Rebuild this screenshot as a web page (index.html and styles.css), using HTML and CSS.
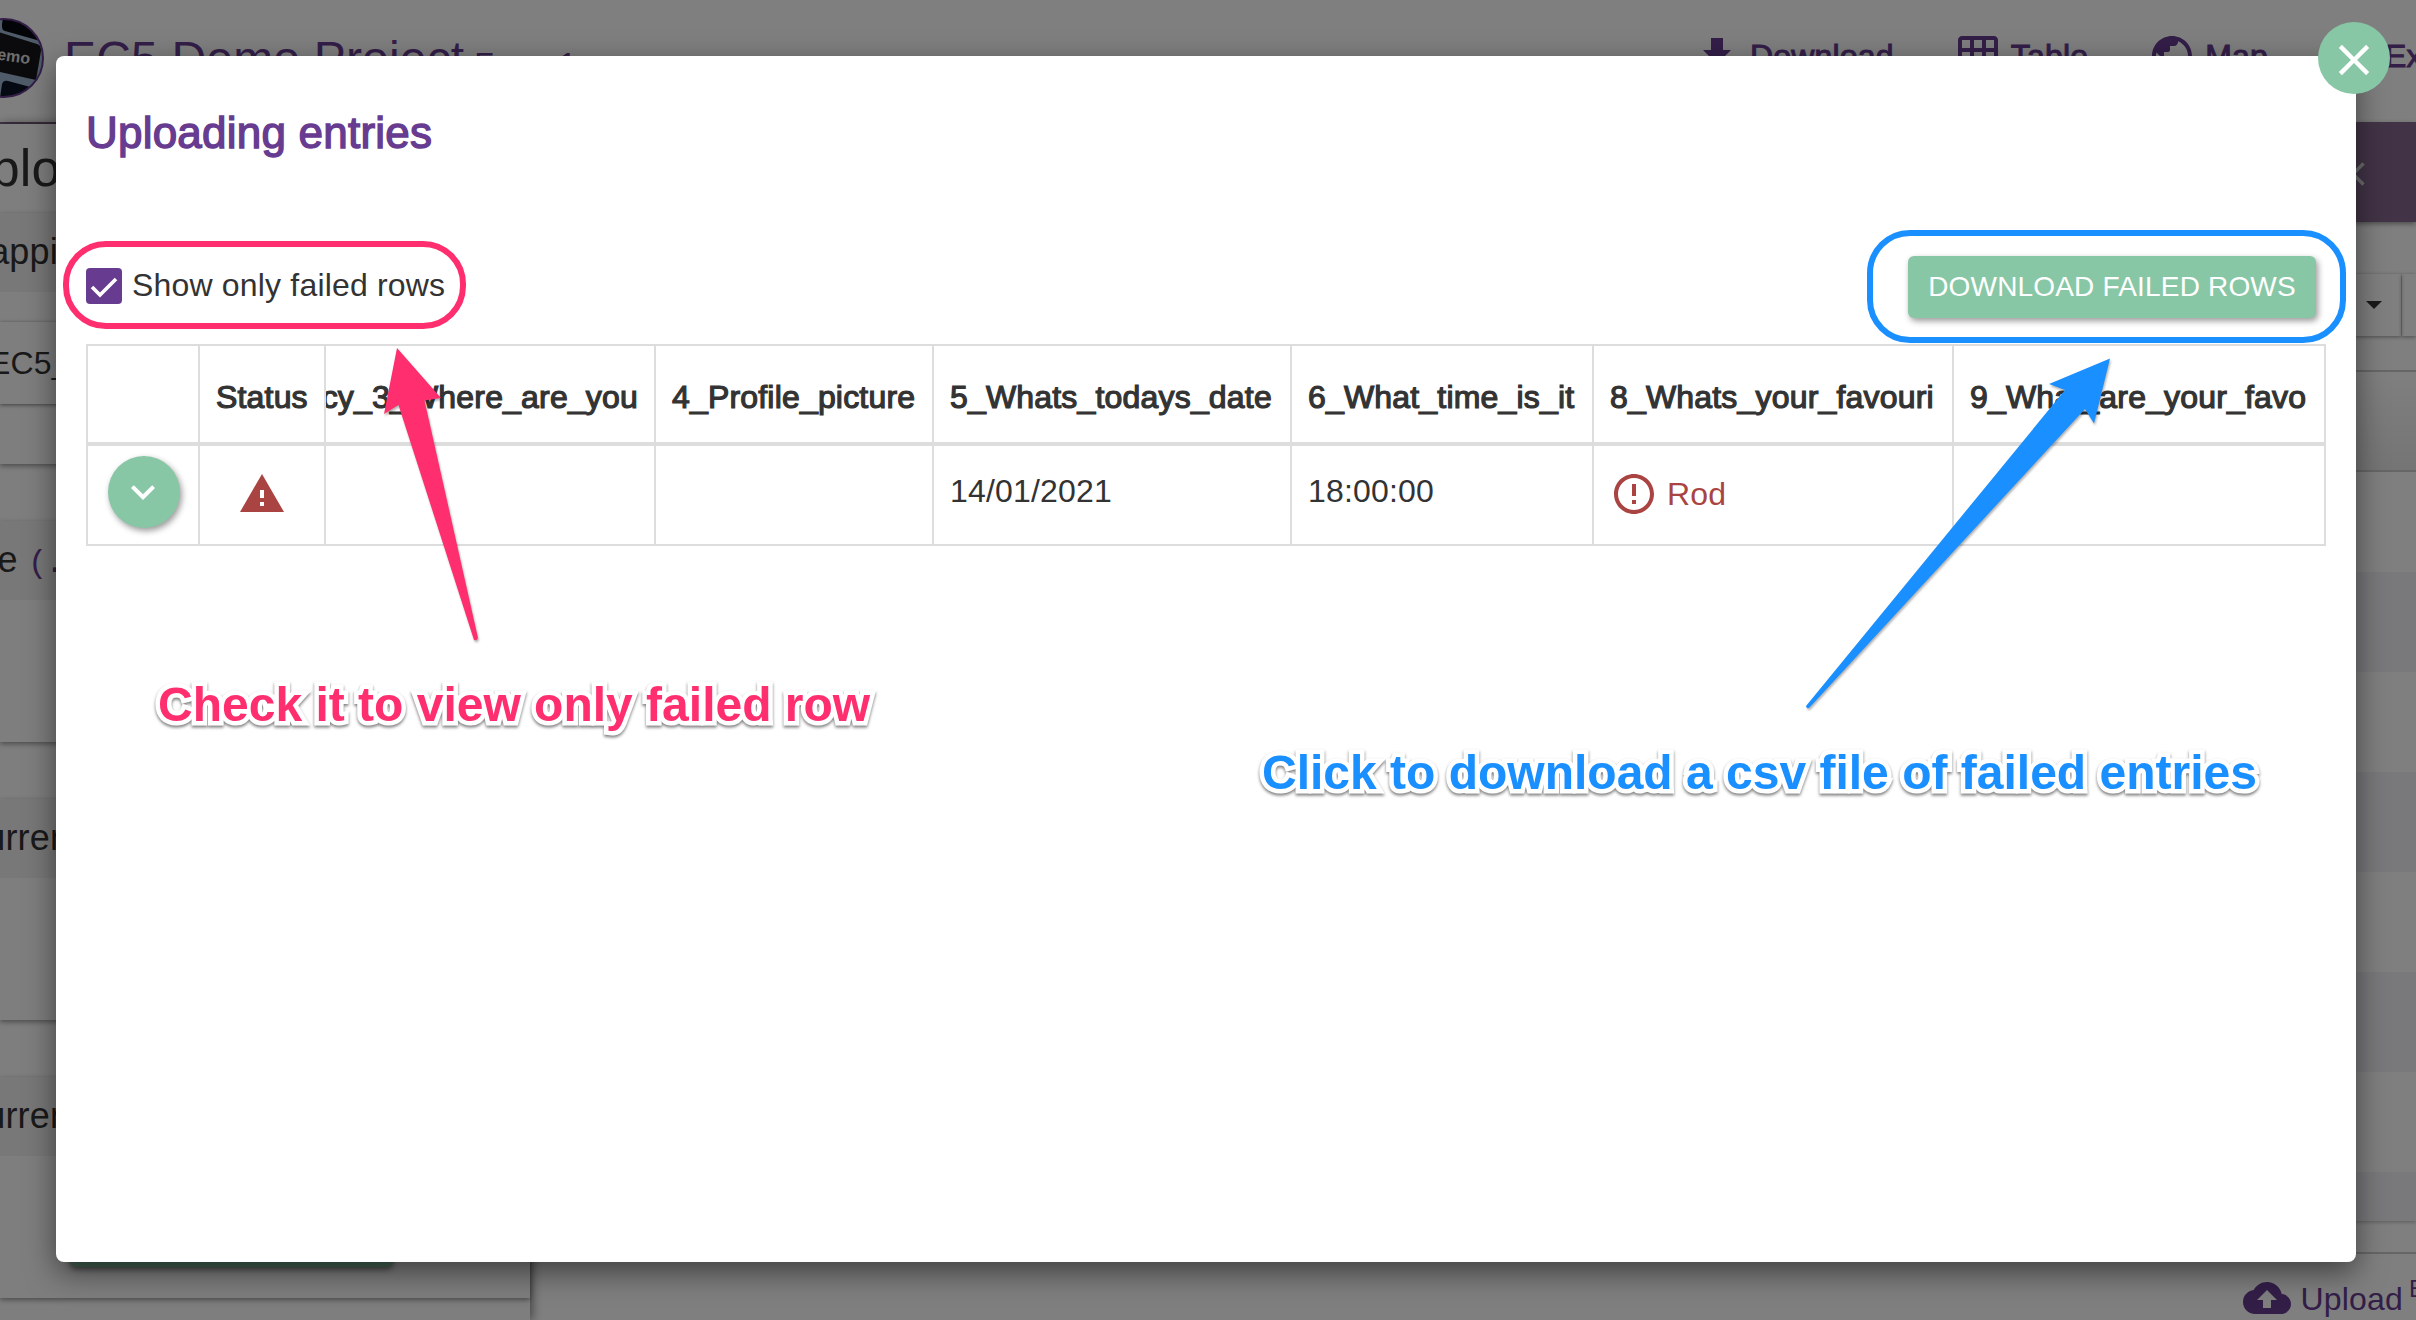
FILE: index.html
```html
<!DOCTYPE html>
<html lang="en">
<head>
<meta charset="utf-8">
<title>EC5 Demo Project</title>
<link rel="stylesheet" href="styles.css">
</head>
<body>
<div class="page">
  <header class="topbar">
    <div class="brand">
      <svg class="logo" viewBox="0 0 80 80">
        <defs><clipPath id="disc"><circle cx="40" cy="40" r="39"/></clipPath></defs>
        <g clip-path="url(#disc)">
          <rect width="80" height="80" fill="#9fb6d0"/>
          <path d="M39 0H80V24L41 13C38 12 37 10 39 0Z" fill="#06080f"/>
          <path d="M0 5L34 14L73 26C76 27 77 29 77 33L72 62L36 54L0 44Z" fill="#17171a"/>
          <path d="M36 80L38 66C39 63 41 62 44 63L74 71V80Z" fill="#0a1424"/>
        </g>
        <circle cx="40" cy="40" r="39" fill="none" stroke="#673c90" stroke-width="2"/>
        <text class="logo-text" x="23" y="42" transform="rotate(8 36 42)">demo</text>
      </svg>
      <span class="project">EC5 Demo Project</span>
      <span class="form-name">Form 1</span>
    </div>
    <nav class="nav">
      <a class="nav-item nav-download"><svg viewBox="0 0 24 24"><path d="M19 9h-4V3H9v6H5l7 7 7-7zM5 18v2h14v-2H5z"/></svg>Download</a>
      <a class="nav-item nav-table"><svg viewBox="0 0 24 24"><path d="M20 2H4c-1.1 0-2 .9-2 2v16c0 1.1.9 2 2 2h16c1.1 0 2-.9 2-2V4c0-1.1-.9-2-2-2zM8 20H4v-4h4v4zm0-6H4v-4h4v4zm0-6H4V4h4v4zm6 12h-4v-4h4v4zm0-6h-4v-4h4v4zm0-6h-4V4h4v4zm6 12h-4v-4h4v4zm0-6h-4v-4h4v4zm0-6h-4V4h4v4z"/></svg>Table</a>
      <a class="nav-item nav-map"><svg viewBox="0 0 24 24"><path d="M12 2C6.48 2 2 6.48 2 12s4.48 10 10 10 10-4.480 10-10S17.520 2 12 2zm-1 17.930c-3.950-.49-7-3.850-7-7.930 0-.62.08-1.210.21-1.790L9 15v1c0 1.100.9 2 2 2v1.930zm6.900-2.540c-.26-.81-1-1.390-1.900-1.390h-1v-3c0-.55-.45-1-1-1H8v-2h2c.55 0 1-.45 1-1V7h2c1.100 0 2-.9 2-2v-.41c2.930 1.190 5 4.060 5 7.410 0 2.080-.8 3.970-2.100 5.390z"/></svg>Map</a>
      <a class="nav-item nav-exit">Exit</a>
    </nav>
  </header>
  <div class="main">
    <aside class="sidebar">
      <h1 class="side-title">Uploading</h1>
      <section class="card card-map">
        <h2 class="card-head">Mapping</h2>
        <div class="card-body"><div class="select">EC5_</div></div>
      </section>
      <section class="card"><h2 class="card-head head-file">file <code>(.csv)</code></h2></section>
      <section class="card"><h2 class="card-head">Current</h2></section>
      <section class="card"><h2 class="card-head">Current</h2><div class="side-button"></div></section>
    </aside>
    <section class="content">
      <div class="bar"><svg viewBox="0 0 24 24"><path d="M19 6.410L17.590 5 12 10.590 6.410 5 5 6.410 10.590 12 5 17.590 6.410 19 12 13.410 17.590 19 19 17.590 13.410 12z"/></svg></div>
      <div class="filters"><div class="filter"><span class="caret"></span></div><div class="filter filter-end"></div></div>
      <div class="grid-head"></div>
      <div class="grid-row"></div><div class="grid-row"></div><div class="grid-row"></div><div class="grid-row"></div>
      <div class="grid-row"></div><div class="grid-row"></div><div class="grid-row"></div><div class="grid-row row-cut"></div>
      <footer class="foot">
        <svg viewBox="0 0 24 24"><path d="M19.350 10.040C18.670 6.590 15.640 4 12 4 9.110 4 6.600 5.640 5.350 8.040 2.340 8.360 0 10.910 0 14c0 3.310 2.690 6 6 6h13c2.760 0 5-2.240 5-5 0-2.640-2.050-4.780-4.650-4.960zM14 13v4h-4v-4H7l5-5 5 5h-3z"/></svg>
        <span>Upload</span><span class="beta">BETA</span>
      </footer>
    </section>
  </div>
</div>

<div class="backdrop">
  <div class="modal">
    <h2 class="modal-title">Uploading entries</h2>
    <div class="tools">
      <label class="check">
        <span class="box"><svg viewBox="0 0 36 36"><path d="M6 19L14 27L30 11" fill="none" stroke="#fff" stroke-width="3.600"/></svg></span>
        Show only failed rows
      </label>
      <button class="download">DOWNLOAD FAILED ROWS</button>
    </div>
    <div class="table">
      <div class="cell th"></div>
      <div class="cell th">Status</div>
      <div class="cell th clipped">cy_3_Where_are_you</div>
      <div class="cell th">4_Profile_picture</div>
      <div class="cell th">5_Whats_todays_date</div>
      <div class="cell th">6_What_time_is_it</div>
      <div class="cell th">8_Whats_your_favouri</div>
      <div class="cell th">9_What_are_your_favo</div>
      <div class="cell mid"><span class="expand"><svg viewBox="0 0 24 24"><path d="M7.410 8.590L12 13.170l4.590-4.580L18 10l-6 6-6-6z"/></svg></span></div>
      <div class="cell mid"><svg class="icon" viewBox="0 0 24 24"><path d="M1 21h22L12 2 1 21zm12-3h-2v-2h2v2zm0-4h-2v-4h2v4z"/></svg></div>
      <div class="cell"></div>
      <div class="cell"></div>
      <div class="cell value">14/01/2021</div>
      <div class="cell value">18:00:00</div>
      <div class="cell error"><svg class="icon" viewBox="0 0 24 24"><path d="M11 15h2v2h-2zm0-8h2v6h-2zm.99-5C6.470 2 2 6.480 2 12s4.470 10 9.990 10C17.520 22 22 17.520 22 12S17.520 2 11.990 2zM12 20c-4.420 0-8-3.580-8-8s3.580-8 8-8 8 3.580 8 8-3.580 8-8 8z"/></svg>Rod</div>
      <div class="cell"></div>
    </div>
    <span class="close"><svg viewBox="0 0 24 24"><path d="M19 6.410L17.590 5 12 10.590 6.410 5 5 6.410 10.590 12 5 17.590 6.410 19 12 13.410 17.590 19 19 17.590 13.410 12z"/></svg></span>
  </div>
</div>

<div class="ring ring-pink"></div>
<div class="ring ring-blue"></div>
<svg class="arrows" viewBox="0 0 2416 1320">
  <path fill="#ff2e6e" d="M397 348L441 398L424.500 400.500L478 638Q477 641 474 640L398.500 405L384 414Z"/>
  <path fill="#1a8fff" d="M2110 358.500L2094 423.500L2085 409L1810 707Q1807 710 1806 706L2065 390L2049 384Z"/>
</svg>
<div class="note note-pink">Check it to view only failed row</div>
<div class="note note-blue">Click to download a csv file of failed entries</div>
</body>
</html>
```
FILE: styles.css
```css
* { box-sizing: border-box; }
body {
  margin: 0;
  width: 2416px;
  height: 1320px;
  overflow: hidden;
  position: relative;
  font-family: "Liberation Sans", Arial, sans-serif;
  font-size: 32px;
  letter-spacing: .18px;
  color: #333;
  background: #fff;
}
h1, h2 { margin: 0; font-weight: 400; }
svg { display: block; fill: currentColor; flex: none; }

/* Page under the dialog */
.page { height: 1320px; display: flex; flex-direction: column; overflow: hidden; }
.topbar {
  height: 124px;
  flex: none;
  display: flex;
  justify-content: space-between;
  border-bottom: 2px solid #85698c;
  color: #673c90;
}
.brand { display: flex; align-items: flex-start; margin-left: -36px; }
.logo { width: 80px; height: 80px; margin-top: 18px; }
.logo-text { fill: #ddd; font-size: 16px; font-weight: 700; letter-spacing: 0; }
.project { font-size: 48px; line-height: 56px; margin: 31px 0 0 20px; }
.form-name { line-height: 40px; margin: 44px 0 0 10px; }
.nav { display: flex; align-items: flex-start; padding-top: 32px; width: 723px; }
.nav-item { display: flex; align-items: center; gap: 9px; line-height: 48px; -webkit-text-stroke: 1px; white-space: nowrap; }
.nav-item svg { width: 48px; height: 48px; stroke: none; }
.nav-table { margin-left: 60px; }
.nav-map { margin-left: 60px; }
.nav-exit { margin-left: 117px; }

.main { flex: 1; display: flex; min-height: 0; }
.sidebar {
  width: 530px;
  position: relative;
  background: #fcfcfc;
  box-shadow: 2px 0 10px rgba(0, 0, 0, .5);
  padding-bottom: 21px;
}
.side-title { font-size: 52px; line-height: 60px; padding-top: 14px; height: 89px; margin-left: -47px; }
.card { height: 221px; margin-bottom: 57px; box-shadow: 0 2px 5px rgba(0, 0, 0, .4); }
.card-map { height: 251px; }
.card-head { height: 79px; font-size: 36px; line-height: 77px; background: #f0f0f0; text-indent: -41px; white-space: nowrap; }
.head-file { text-indent: -29px; }
.head-file code { font: 32px "Liberation Mono", monospace; color: #673c90; margin-left: 0; letter-spacing: -2px; }
.card-body { padding: 30px 24px 0 0; }
.select { height: 82px; line-height: 82px; text-indent: -11px; box-shadow: 0 1px 4px rgba(0, 0, 0, .5); }
.side-button { width: 323px; height: 62px; margin: 49px 0 0 70px; border-radius: 6px; background: #88c7a6; box-shadow: 0 2px 6px rgba(0, 0, 0, .5); }

.content { flex: 1; margin-top: -2px; display: flex; flex-direction: column; }
.bar {
  height: 100px;
  flex: none;
  background: #85698c;
  color: #ddd;
  display: flex;
  justify-content: flex-end;
  align-items: center;
  padding: 4px 43px 0 0;
  box-shadow: 0 2px 5px rgba(0, 0, 0, .4);
}
.bar svg { width: 40px; height: 40px; }
.filters { display: flex; justify-content: flex-end; gap: 1px; margin-top: 52px; height: 62px; flex: none; }
.filter { width: 260px; display: flex; justify-content: flex-end; align-items: center; padding-right: 19px; box-shadow: 0 1px 4px rgba(0, 0, 0, .4); }
.filter-end { width: 14px; padding: 0; }
.caret { border: 8px solid transparent; border-top-color: #333; border-bottom: 0; margin-bottom: 0; }
.grid-head { height: 102px; flex: none; margin-top: 34px; border: solid #ccc; border-width: 2px 0; background: linear-gradient(#fff, #eaeaea); }
.grid-row { height: 100px; flex: none; }
.grid-row:nth-of-type(odd) { background: #f2f2f7; }
.grid-row:nth-of-type(even) { background: #fff; }
.row-cut { height: 49px; background: #f2f2f7; box-shadow: 0 2px 3px rgba(0, 0, 0, .2); }
.foot {
  margin-top: 31px;
  border-top: 2px solid #ccc;
  height: 68px;
  display: flex;
  justify-content: flex-end;
  padding-top: 20px;
  color: #673c90;
  line-height: 50px;
}
.foot svg { width: 48px; height: 48px; margin-right: 10px; }
.beta { font-size: 24px; line-height: 30px; width: 7px; margin-left: 6px; overflow: hidden; }

/* Dialog */
.backdrop { position: absolute; inset: 0; background: rgba(0, 0, 0, .5); padding: 56px 60px 58px 56px; }
.modal {
  position: relative;
  height: 1206px;
  padding: 53px 30px 0;
  background: #fff;
  border-radius: 8px;
  box-shadow: 0 10px 30px rgba(0, 0, 0, .5);
}
.modal-title { font-size: 44px; line-height: 48px; color: #673c90; -webkit-text-stroke: 1.400px; letter-spacing: .22px; }
.tools { display: flex; justify-content: space-between; height: 62px; margin: 99px 10px 26px 0; }
.check { display: flex; align-items: center; gap: 10px; height: 58px; }
.box { width: 36px; height: 36px; background: #673c90; border-radius: 4px; margin-top: 2px; }
.download {
  width: 408px;
  height: 62px;
  border: 0;
  padding: 0;
  border-radius: 6px;
  background: #88c7a6;
  color: #fff;
  font: 28px "Liberation Sans", Arial, sans-serif;
  letter-spacing: .18px;
  white-space: nowrap;
  box-shadow: 2px 3px 6px rgba(0, 0, 0, .4);
}
.table {
  display: grid;
  grid-template-columns: 112px 126px 330px 278px 358px 302px 360px 372px;
  grid-template-rows: 100px 100px;
  border: 2px solid #ddd;
  border-right: 0;
  border-bottom: 0;
}
.cell { border-right: 2px solid #ddd; border-bottom: 2px solid #ddd; padding: 0 16px; display: flex; align-items: center; white-space: nowrap; overflow: hidden; }
.th { border-bottom-width: 4px; padding-top: 6px; -webkit-text-stroke: 1.200px; }
.clipped { justify-content: flex-end; }
.mid { justify-content: center; color: #a94442; padding: 0; }
.value { padding-bottom: 8px; }
.icon { width: 48px; height: 48px; }
.error { color: #a94442; gap: 9px; padding-bottom: 2px; }
.expand { width: 72px; height: 72px; border-radius: 50%; background: #88c7a6; color: #fff; display: flex; align-items: center; justify-content: center; margin: 0 0 6px 1px; box-shadow: 2px 3px 6px rgba(0, 0, 0, .4); }
.expand svg { width: 48px; height: 48px; margin: 0 2px 0 0; }
.mid .icon { margin-bottom: 2px; }
.close {
  position: absolute;
  top: -34px;
  right: -34px;
  width: 72px;
  height: 72px;
  border-radius: 50%;
  background: #88c7a6;
  color: #fff;
  display: flex;
  align-items: center;
  justify-content: center;
}
.close svg { width: 52px; height: 52px; margin-top: 3px; }

/* Annotations drawn over the dialog */
.ring { position: absolute; border: 6px solid; border-radius: 43px; }
.ring-pink { left: 63px; top: 241px; width: 403px; height: 88px; color: #ff2e6e; }
.ring-blue { left: 1867px; top: 230px; width: 479px; height: 113px; color: #1a8fff; }
.arrows { position: absolute; left: 0; top: 0; width: 2416px; height: 1320px; filter: drop-shadow(1px 2px 1px rgba(0, 0, 0, .3)); }
.note {
  position: absolute;
  font-size: 48px;
  font-weight: 700;
  line-height: 56px;
  letter-spacing: 0;
  white-space: nowrap;
  -webkit-text-stroke: 9px #fff;
  paint-order: stroke fill;
  filter: drop-shadow(0 2px 1.500px rgba(0, 0, 0, .5));
}
.note-pink { left: 158px; top: 677px; color: #ff2e6e; }
.note-blue { left: 1262px; top: 745px; color: #1a8fff; }
```
